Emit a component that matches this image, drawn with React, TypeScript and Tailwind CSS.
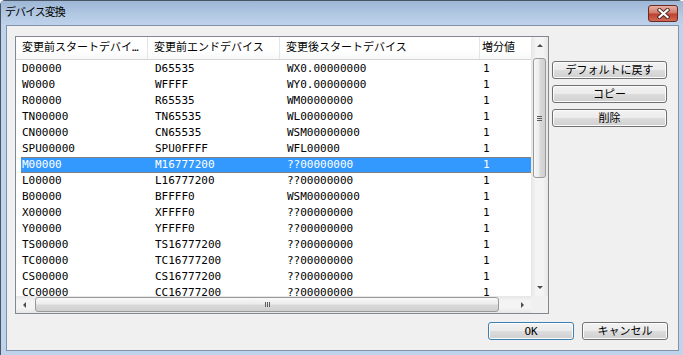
const rows: [string, string, string, string][] = [
  ["D00000", "D65535", "WX0.00000000", "1"],
  ["W0000", "WFFFF", "WY0.00000000", "1"],
  ["R00000", "R65535", "WM00000000", "1"],
  ["TN00000", "TN65535", "WL00000000", "1"],
  ["CN00000", "CN65535", "WSM00000000", "1"],
  ["SPU00000", "SPU0FFFF", "WFL00000", "1"],
  ["M00000", "M16777200", "??00000000", "1"],
  ["L00000", "L16777200", "??00000000", "1"],
  ["B00000", "BFFFF0", "WSM00000000", "1"],
  ["X00000", "XFFFF0", "??00000000", "1"],
  ["Y00000", "YFFFF0", "??00000000", "1"],
  ["TS00000", "TS16777200", "??00000000", "1"],
  ["TC00000", "TC16777200", "??00000000", "1"],
  ["CS00000", "CS16777200", "??00000000", "1"],
  ["CC00000", "CC16777200", "??00000000", "1"],
];

const SELECTED = 6;

function Button({ label, primary = false, className = "" }: { label: string; primary?: boolean; className?: string }) {
  return (
    <button
      className={`h-[18px] rounded-[3px] border text-[11px] leading-none text-black bg-[linear-gradient(#f2f2f2_0%,#ebebeb_50%,#dddddd_51%,#cfcfcf_100%)] shadow-[inset_0_0_0_1px_#fcfcfc] ${
        primary ? "border-[#3c7fb1] shadow-[inset_0_0_0_1px_#9ad7f3]" : "border-[#707070]"
      } ${className}`}
    >
      {label}
    </button>
  );
}

function Arrow({ dir }: { dir: "up" | "down" | "left" | "right" }) {
  const pts = {
    up: "1,5 4,2 7,5",
    down: "1,2 4,5 7,2",
    left: "5,1 2,4 5,7",
    right: "2,1 5,4 2,7",
  }[dir];
  return (
    <svg width="8" height="8" viewBox="0 0 8 8">
      <polygon points={pts} fill="#4d4d4d" />
    </svg>
  );
}

function VScroll() {
  return (
    <div className="flex flex-col bg-[linear-gradient(90deg,#e6e6e6,#f4f4f4_30%,#f4f4f4_70%,#e6e6e6)]">
      <div className="flex h-[17px] items-center justify-center">
        <Arrow dir="up" />
      </div>
      <div className="flex-1 px-[2px] pt-[4px]">
        <div className="flex h-[120px] items-center justify-center rounded-[3px] border border-[#9a9a9a] bg-[linear-gradient(90deg,#f8f8f8,#ececec_45%,#d9d9d9_55%,#d0d0d0)]">
          <div className="flex flex-col gap-[1px]">
            <div className="h-px w-[5px] bg-[#5c5c5c]" />
            <div className="h-px w-[5px] bg-[#5c5c5c]" />
            <div className="h-px w-[5px] bg-[#5c5c5c]" />
          </div>
        </div>
      </div>
      <div className="flex h-[17px] items-center justify-center">
        <Arrow dir="down" />
      </div>
    </div>
  );
}

function HScroll() {
  return (
    <div className="flex bg-[linear-gradient(#e6e6e6,#f4f4f4_30%,#f4f4f4_70%,#e6e6e6)]">
      <div className="flex w-[17px] items-center justify-center">
        <Arrow dir="left" />
      </div>
      <div className="flex-1 py-[1px] pl-[2px] pr-[15px]">
        <div className="flex h-full items-center justify-center rounded-[3px] border border-[#9a9a9a] bg-[linear-gradient(#f8f8f8,#ececec_45%,#d9d9d9_55%,#d0d0d0)]">
          <div className="flex gap-[1px]">
            <div className="h-[5px] w-px bg-[#5c5c5c]" />
            <div className="h-[5px] w-px bg-[#5c5c5c]" />
            <div className="h-[5px] w-px bg-[#5c5c5c]" />
          </div>
        </div>
      </div>
      <div className="flex w-[17px] items-center justify-center">
        <Arrow dir="right" />
      </div>
    </div>
  );
}

export default function App() {
  return (
    <div className="h-[355px] w-[683px] overflow-hidden font-['DejaVu_Sans_Mono','Noto_Sans_CJK_JP',monospace]">
      <div className="flex h-full w-full flex-col rounded-t-[5px] border-l border-t border-[#4a5566] bg-[#bfd3ea]">
        {/* title bar */}
        <div className="flex h-[24px] items-center justify-between bg-[linear-gradient(#9db7d6,#b3c9e3_60%,#bed2ea)] pl-[4px] pr-[5px]">
          <span className="text-[11px] tracking-[-1px] text-black">デバイス変換</span>
          <div className="flex h-[17px] w-[30px] items-center justify-center rounded-[3px] border border-[#6b2a22] bg-[linear-gradient(#e8aea2,#d27d6d_45%,#c0402f_55%,#cf6a57)]">
            <svg width="13" height="11" viewBox="0 0 13 11">
              <path d="M2.5 2 L10.5 9 M10.5 2 L2.5 9" stroke="#4a2a26" strokeWidth="4" strokeLinecap="square" />
              <path d="M2.5 2 L10.5 9 M10.5 2 L2.5 9" stroke="#ffffff" strokeWidth="2.2" strokeLinecap="square" />
            </svg>
          </div>
        </div>

        {/* frame + client */}
        <div className="flex flex-1 pb-[4px] pl-[5px] pr-[4px]">
          <div className="flex flex-1 flex-col border border-[#8193ab] bg-[#f0f0f0] pl-[8px] pt-[10px]">
            <div className="flex items-start">
              {/* list view */}
              <div className="grid h-[278px] w-[534px] grid-cols-[1fr_17px] grid-rows-[1fr_17px] border border-[#828790] bg-white">
                <div className="flex flex-col overflow-hidden">
                  <div className="flex h-[23px] shrink-0 whitespace-nowrap border-b border-[#d5d5d5] bg-[linear-gradient(#ffffff,#ffffff_60%,#f7f8f9)] text-[11px] text-black">
                    <div className="flex w-[132px] items-center overflow-hidden border-r border-[#e5e5e5] pl-[6px]">変更前スタートデバイ…</div>
                    <div className="flex w-[132px] items-center overflow-hidden border-r border-[#e5e5e5] pl-[6px]">変更前エンドデバイス</div>
                    <div className="flex w-[200px] items-center overflow-hidden border-r border-[#e5e5e5] pl-[6px]">変更後スタートデバイス</div>
                    <div className="flex flex-1 items-center pl-[2px]">増分値</div>
                  </div>
                  <div className="flex flex-col pt-[1px] text-[11px]">
                    {rows.map((r, i) => {
                      const sel = i === SELECTED;
                      return (
                        <div
                          key={i}
                          className={`ml-[5px] flex h-[16px] shrink-0 items-center whitespace-nowrap leading-[16px] ${
                            sel ? "border-y border-dotted border-[#cc6600] bg-[#3399ff] text-white" : "text-black"
                          }`}
                        >
                          <div className="w-[127px] pl-[1px]">{r[0]}</div>
                          <div className="w-[132px] pl-[7px]">{r[1]}</div>
                          <div className="w-[200px] pl-[7px]">{r[2]}</div>
                          <div className="flex-1 pl-[3px]">{r[3]}</div>
                        </div>
                      );
                    })}
                  </div>
                </div>
                <VScroll />
                <HScroll />
                <div className="bg-[#f0f0f0]" />
              </div>

              {/* side buttons */}
              <div className="ml-[3px] mt-[25px] flex w-[115px] flex-col gap-[6px]">
                <Button label="デフォルトに戻す" />
                <Button label="コピー" />
                <Button label="削除" />
              </div>
            </div>

            {/* bottom buttons */}
            <div className="mt-[8px] flex justify-end gap-[8px] pr-[10px]">
              <Button label="OK" primary className="w-[86px]" />
              <Button label="キャンセル" className="w-[86px]" />
            </div>
          </div>
        </div>
      </div>
    </div>
  );
}
